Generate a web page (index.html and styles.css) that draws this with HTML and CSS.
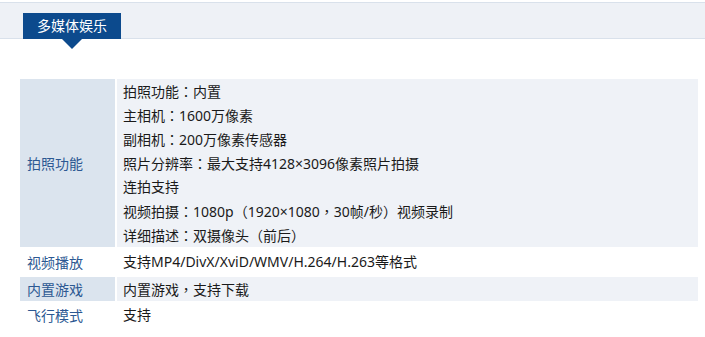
FILE: index.html
```html
<!DOCTYPE html>
<html lang="zh-CN">
<head>
<meta charset="utf-8">
<link rel="stylesheet" href="styles.css">
</head>
<body>
<div class="header">
  <div class="tab">多媒体娱乐</div>
</div>
<div class="spec">
  <div class="label">拍照功能</div>
  <div class="value shaded">
    <div class="line">拍照功能<span class="pn" lang="zh-TW">：</span>内置</div>
    <div class="line">主相机<span class="pn" lang="zh-TW">：</span>1600万像素</div>
    <div class="line">副相机<span class="pn" lang="zh-TW">：</span>200万像素传感器</div>
    <div class="line">照片分辨率<span class="pn" lang="zh-TW">：</span>最大支持4128×3096像素照片拍摄</div>
    <div class="line">连拍支持</div>
    <div class="line">视频拍摄<span class="pn" lang="zh-TW">：</span>1080p（1920×1080<span class="pn" lang="zh-TW">，</span>30帧/秒）视频录制</div>
    <div class="line">详细描述<span class="pn" lang="zh-TW">：</span>双摄像头（前后）</div>
  </div>
  <div class="label plain">视频播放</div>
  <div class="value">
    <div class="line tall">支持MP4/DivX/XviD/WMV/H.264/H.263等格式</div>
  </div>
  <div class="label">内置游戏</div>
  <div class="value shaded">
    <div class="line">内置游戏<span class="pn" lang="zh-TW">，</span>支持下载</div>
  </div>
  <div class="label plain">飞行模式</div>
  <div class="value">
    <div class="line">支持</div>
  </div>
</div>
</body>
</html>
```

FILE: styles.css
```css
html, body {
  margin: 0;
  padding: 0;
  background: #fff;
}
body {
  font-family: "Noto Sans", "Noto Sans CJK SC", sans-serif;
  font-size: 14px;
  color: #1a1a1a;
  padding-top: 2px;
}
.header {
  height: 35px;
  border-top: 1px solid #d9e1eb;
  border-bottom: 1px solid #d9e1eb;
  background: #eef1f6;
  position: relative;
}
.tab {
  position: absolute;
  left: 23px;
  top: 10px;
  height: 26px;
  padding: 0 14px;
  background: #0c4a8d;
  color: #fff;
  line-height: 26px;
  font-size: 14px;
}
.tab::after {
  content: "";
  position: absolute;
  left: 39px;
  top: 26px;
  border-left: 10px solid transparent;
  border-right: 10px solid transparent;
  border-top: 10px solid #0c4a8d;
}
.spec {
  display: grid;
  grid-template-columns: 95px 581px;
  grid-template-rows: 168px 26px 24px 24px;
  gap: 2px;
  margin: 40px 0 0 20px;
}
.label {
  background: #dbe4ee;
  color: #2c5892;
  padding-left: 7px;
  display: flex;
  align-items: center;
}
.label.plain {
  background: #fff;
}
.value {
  padding-left: 6px;
  display: flex;
  flex-direction: column;
  justify-content: center;
}
.value.shaded {
  background: #eff2f7;
}
.line {
  height: 24px;
  line-height: 24px;
  white-space: nowrap;
}
.line.tall {
  height: 26px;
  line-height: 26px;
}
.pn {
  font-family: "Noto Sans CJK TC", sans-serif;
}
```
